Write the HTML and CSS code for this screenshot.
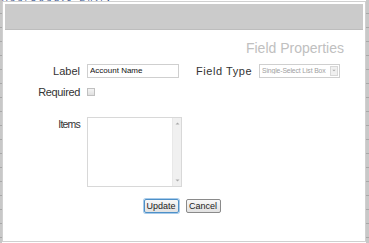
FILE: index.html
```html
<!DOCTYPE html>
<html>
<head>
<meta charset="utf-8">
<link rel="stylesheet" href="styles.css">
</head>
<body>
<div class="page">
  <div class="bg-top">Add/Update Entry</div>
  <div class="stage">
    <div class="edge left"></div>
    <div class="dialog">
      <div class="titlebar"></div>
      <div class="content">
        <div class="heading">Field Properties</div>
        <div class="row row-first">
          <label class="lbl lbl-label">Label</label>
          <input class="txt" type="text" value="Account Name">
          <label class="lbl lbl-type">Field Type</label>
          <div class="select">
            <span class="select-text">Single-Select List Box</span>
            <span class="select-btn"><svg width="7" height="7" viewBox="0 0 7 7"><path d="M1.5 2.5 L3.5 4.5 L5.5 2.5 Z" fill="#aaa"/></svg></span>
          </div>
        </div>
        <div class="row row-req">
          <label class="lbl lbl-req">Required</label>
          <span class="check"></span>
        </div>
        <div class="row row-items">
          <label class="lbl lbl-items">Items</label>
          <div class="textarea">
            <div class="ta-body"></div>
            <div class="ta-scroll">
              <svg width="7" height="7" viewBox="0 0 7 7"><path d="M1.5 4.5 L3.5 2.5 L5.5 4.5 Z" fill="#aaa"/></svg>
              <svg width="7" height="7" viewBox="0 0 7 7"><path d="M1.5 2.5 L3.5 4.5 L5.5 2.5 Z" fill="#aaa"/></svg>
            </div>
          </div>
        </div>
        <div class="buttons">
          <button class="btn btn-primary">Update</button>
          <button class="btn">Cancel</button>
        </div>
      </div>
    </div>
    <div class="edge right"></div>
  </div>
</div>
</body>
</html>
```
FILE: styles.css
```css
* { box-sizing: border-box; }
html, body { margin: 0; padding: 0; }
body {
  width: 369px;
  height: 243px;
  overflow: hidden;
  background: #fff;
  font-family: "Liberation Sans", Arial, sans-serif;
  color: #333;
}
.page { position: relative; width: 369px; height: 243px; }
.bg-top {
  position: absolute;
  left: 2px;
  top: -5px;
  font-size: 8px;
  line-height: 8px;
  color: #2a4a8a;
  letter-spacing: 3px;
}
.stage {
  display: flex;
  height: 243px;
}
.edge {
  height: 243px;
  background: repeating-linear-gradient(to bottom, #c8c8c8 0, #c8c8c8 13px, #a8a8a8 13px, #a8a8a8 14px);
}
.edge.left { width: 2px; }
.edge.right { width: 3px; }
.dialog {
  position: relative;
  width: 364px;
  height: 241px;
  margin-top: 1px;
  border: 1px solid #d0d0d0;
  background: #fff;
  padding: 2px 2px 0 2px;
  display: flex;
  flex-direction: column;
}
.titlebar {
  height: 26px;
  background: #cbcbcb;
  border-bottom: 1px solid #bdbdbd;
}
.content {
  position: relative;
  flex: 1;
}
.heading {
  text-align: right;
  padding-right: 19px;
  margin-top: 10px;
  font-size: 14px;
  color: #c0c0c0;
  line-height: 16px;
}
.row {
  display: flex;
  align-items: center;
}
.lbl {
  width: 82px;
  text-align: right;
  padding-right: 7px;
  font-size: 11px;
  color: #333;
  white-space: nowrap;
}
.lbl-req { letter-spacing: -0.35px; }
.lbl-items { font-size: 10.5px; letter-spacing: -0.8px; padding-right: 7px; }
.row-first { margin-top: 7px; height: 15px; }
.txt {
  width: 92px;
  height: 14px;
  border: 1px solid #cfcfcf;
  padding: 0 2px;
  font-family: "Liberation Sans", Arial, sans-serif;
  font-size: 8px;
  color: #111;
  outline: none;
}
.lbl-type {
  width: auto;
  margin-left: 17px;
  padding-right: 7px;
  font-size: 11px;
  letter-spacing: 0.55px;
}
.select {
  width: 81px;
  height: 14px;
  border: 1px solid #cfcfcf;
  display: flex;
  align-items: center;
  padding-left: 2px;
  overflow: hidden;
}
.select-text {
  flex: 1;
  overflow: hidden;
  font-size: 6.8px;
  letter-spacing: -0.12px;
  color: #a0a0a0;
  white-space: nowrap;
}
.select-btn {
  flex: none;
  width: 8px;
  height: 10px;
  border: 1px solid #d8d8d8;
  background: #f0f0f0;
  margin-right: 1px;
  display: flex;
  align-items: center;
  justify-content: center;
}
.row-req { margin-top: 8px; height: 12px; }
.check {
  width: 8px;
  height: 8px;
  border: 1px solid #c0c0c0;
  background: linear-gradient(#f4f4f4, #e0e0e0);
}
.row-items { margin-top: 19px; align-items: flex-start; }
.lbl-items { line-height: 14px; }
.textarea {
  width: 95px;
  height: 70px;
  border: 1px solid #d8d8d8;
  display: flex;
}
.ta-body { flex: 1; background: #fff; }
.ta-scroll {
  width: 9px;
  background: #f0f0f0;
  border-left: 1px solid #e8e8e8;
  display: flex;
  flex-direction: column;
  justify-content: space-between;
  align-items: center;
  padding: 2px 0;
}
.buttons {
  display: flex;
  justify-content: center;
  gap: 7px;
  margin-top: 12px;
  padding-right: 4px;
}
.btn {
  width: 35px;
  height: 14px;
  padding: 0;
  font-family: "Liberation Sans", Arial, sans-serif;
  font-size: 9px;
  color: #222;
  background: linear-gradient(#f8f8f8, #e2e2e2);
  border: 1px solid #8a8a8a;
  border-radius: 2px;
  line-height: 11px;
}
.btn-primary {
  border-color: #4d90c8;
  box-shadow: 0 0 0 1px #a8cbea;
}
```
